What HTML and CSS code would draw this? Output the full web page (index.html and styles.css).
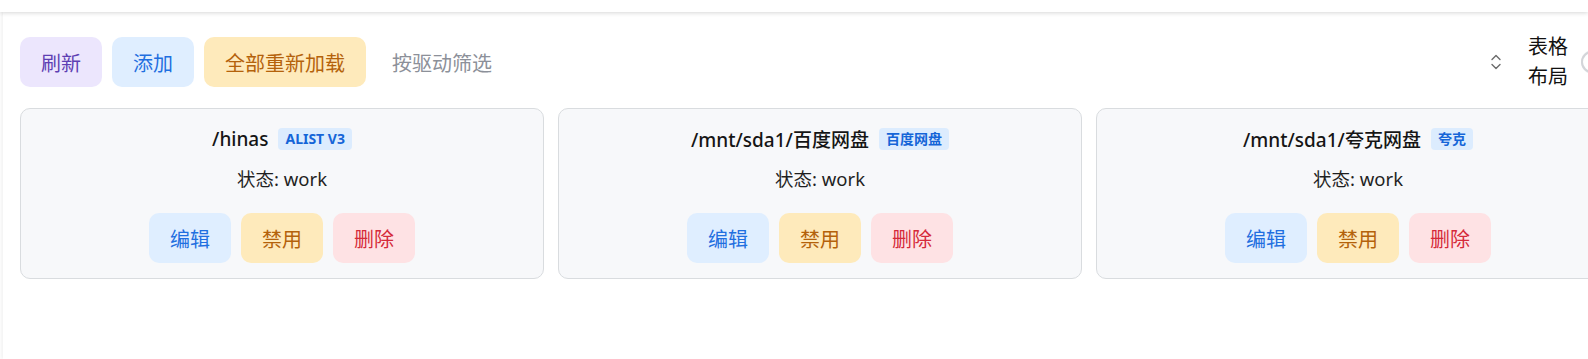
FILE: index.html
```html
<!DOCTYPE html>
<html>

	<head>
		<meta charset="utf-8">
		<title>挂载管理</title>
		<link rel="stylesheet" href="styles.css">
	</head>

	<body>
		<div class="topbar"></div>
		<div class="panel">
			<div class="toolbar">
				<a class="btn purple">刷新</a>
				<a class="btn blue">添加</a>
				<a class="btn orange">全部重新加载</a>
				<div class="select">
					<span class="placeholder">按驱动筛选</span>
					<svg class="chevron" width="12" height="18" viewBox="0 0 12 18">
						<path d="M2 6.5 L6 2.5 L10 6.5 M2 11.5 L6 15.5 L10 11.5" fill="none" stroke="#6b6b6b" stroke-width="1.4" stroke-linecap="round" stroke-linejoin="round"/>
					</svg>
				</div>
				<span class="layout-label">表格布局</span>
				<span class="switch"><i></i></span>
			</div>

			<div class="cards">
				<div class="card">
					<div class="title"><span>/hinas</span><span class="tag">ALIST V3</span></div>
					<div class="state">状态: work</div>
					<div class="ops">
						<a class="btn blue">编辑</a>
						<a class="btn orange">禁用</a>
						<a class="btn red">删除</a>
					</div>
				</div>
				<div class="card">
					<div class="title"><span>/mnt/sda1/百度网盘</span><span class="tag">百度网盘</span></div>
					<div class="state">状态: work</div>
					<div class="ops">
						<a class="btn blue">编辑</a>
						<a class="btn orange">禁用</a>
						<a class="btn red">删除</a>
					</div>
				</div>
				<div class="card">
					<div class="title"><span>/mnt/sda1/夸克网盘</span><span class="tag">夸克</span></div>
					<div class="state">状态: work</div>
					<div class="ops">
						<a class="btn blue">编辑</a>
						<a class="btn orange">禁用</a>
						<a class="btn red">删除</a>
					</div>
				</div>
			</div>
		</div>
	</body>

</html>
```

FILE: styles.css
```css
* {
	margin: 0;
	padding: 0;
	box-sizing: border-box;
}
html,
body {
	overflow: hidden;
	background: #fff;
}
body {
	font-family: "Noto Sans", "Noto Sans CJK SC", sans-serif;
	color: #1f1f1f;
}
.topbar {
	height: 12px;
	background: #fff;
	position: relative;
	z-index: 1;
	box-shadow: 0 1px 4px rgba(0, 0, 0, 0.16);
}
.panel {
	width: 1637px;
	margin-left: 3px;
	padding: 20px 17px 40px;
	background: #fff;
	box-shadow: -2px 0 3px rgba(0, 0, 0, 0.05);
	min-height: 347px;
}

.toolbar {
	display: flex;
	align-items: center;
	gap: 10px;
	height: 60px;
}
.btn {
	display: flex;
	align-items: center;
	justify-content: center;
	height: 50px;
	padding: 0 21px;
	border-radius: 10px;
	font-size: 20px;
	white-space: nowrap;
	cursor: pointer;
}
.purple {
	background: #ece6fd;
	color: #5e3fb3;
}
.blue {
	background: #dfeeff;
	color: #1f6fe0;
}
.orange {
	background: #feeabb;
	color: #b4620b;
}
.red {
	background: #fee2e4;
	color: #d52a3a;
}

.select {
	flex: 1;
	display: flex;
	align-items: center;
	justify-content: space-between;
	height: 50px;
	padding: 0 8px 0 16px;
}
.placeholder {
	font-size: 20px;
	color: #8c9099;
}
.chevron {
	display: block;
}
.layout-label {
	width: 42px;
	margin-left: 8px;
	font-size: 20px;
	line-height: 30px;
	color: #111;
}
.switch {
	width: 42px;
	height: 24px;
	margin-left: 1px;
	border-radius: 12px;
	background: #e6e7ea;
	position: relative;
}
.switch i {
	position: absolute;
	left: 0;
	top: 1px;
	width: 22px;
	height: 22px;
	border-radius: 50%;
	background: #fff;
	border: 2px solid #d3d5d9;
}

.cards {
	display: grid;
	grid-template-columns: repeat(3, 524px);
	gap: 14px;
	margin-top: 16px;
}
.card {
	background: #f7f8fa;
	border: 1px solid #d9dcdf;
	border-radius: 10px;
	padding: 17px 0 15px;
	text-align: center;
}
.title {
	display: flex;
	justify-content: center;
	align-items: center;
	gap: 10px;
	height: 26px;
	font-size: 19px;
	font-weight: 500;
	color: #151515;
}
.tag {
	display: inline-block;
	height: 22px;
	line-height: 22px;
	padding: 0 7px;
	border-radius: 4px;
	background: #dcecfe;
	color: #1565d8;
	font-size: 14px;
	font-weight: 700;
}
.state {
	margin-top: 14px;
	font-size: 18.5px;
	line-height: 26px;
}
.ops {
	display: flex;
	justify-content: center;
	gap: 10px;
	margin-top: 21px;
}
```
